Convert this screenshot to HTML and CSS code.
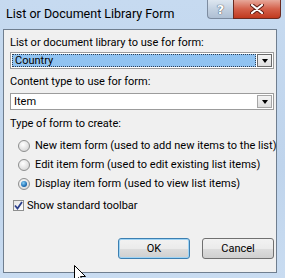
FILE: index.html
```html
<!DOCTYPE html>
<html lang="en">
<head>
    <meta charset="UTF-8">
    <title>List or Document Library Form</title>
    <link rel="stylesheet" href="styles.css">
</head>
<body>
    <div class="window">
        <div class="titlebar">
            <span class="title">List or Document Library Form</span>
            <div class="caption-buttons">
                <span class="btn-help">?</span>
                <span class="btn-close">
                    <svg width="14" height="10" viewBox="0 0 14 10">
                        <path d="M2 1 L12 9 M12 1 L2 9" stroke="#5a1a12" stroke-width="4" stroke-linecap="round"/>
                        <path d="M2 1 L12 9 M12 1 L2 9" stroke="#fff" stroke-width="2.2" stroke-linecap="round"/>
                    </svg>
                </span>
            </div>
        </div>
        <div class="client">
            <div class="field-label first">List or document library to use for form:</div>
            <div class="combo focused">
                <span class="combo-value">Country</span>
                <span class="combo-arrow"></span>
            </div>
            <div class="field-label">Content type to use for form:</div>
            <div class="combo second">
                <span class="combo-value">Item</span>
                <span class="combo-arrow"></span>
            </div>
            <div class="field-label group">Type of form to create:</div>
            <div class="options">
                <div class="option"><span class="radio"></span>New item form (used to add new items to the list)</div>
                <div class="option"><span class="radio"></span>Edit item form (used to edit existing list items)</div>
                <div class="option"><span class="radio checked"></span>Display item form (used to view list items)</div>
            </div>
            <div class="check-row">
                <span class="checkbox">
                    <svg width="9" height="9" viewBox="0 0 9 9">
                        <path d="M1 4.5 L3.5 7.5 L8 1" fill="none" stroke="#2b3f8c" stroke-width="1.8"/>
                    </svg>
                </span>
                Show standard toolbar
            </div>
            <div class="buttons">
                <button class="default">OK</button>
                <button>Cancel</button>
            </div>
        </div>
        <svg class="cursor" width="13" height="20" viewBox="0 0 13 20">
            <path d="M0.5 0.5 L0.5 16.5 L4.5 12.5 L7.5 18.5 L9.5 17.5 L6.5 11.5 L11.5 11.5 Z" fill="#fff" stroke="#000" stroke-width="1"/>
        </svg>
    </div>
</body>
</html>
```

FILE: styles.css
```css
body {
    margin: 0;
    font-family: Roboto, "Liberation Sans", sans-serif;
    font-size: 11px;
    color: #000;
}
.window {
    position: relative;
    width: 285px;
    height: 278px;
    box-sizing: border-box;
    padding: 0 8px 5px 3px;
    display: flex;
    flex-direction: column;
    overflow: hidden;
    background: linear-gradient(#c6daf0, #bfd4ec 60%, #c9dcf1);
}
.titlebar {
    height: 29px;
    display: flex;
    align-items: flex-start;
}
.title {
    flex: 1;
    padding: 6px 0 0 3px;
    font-size: 12.5px;
    line-height: 16px;
    white-space: nowrap;
}
.caption-buttons {
    display: flex;
    margin-right: -4px;
}
.btn-help,
.btn-close {
    height: 19px;
    box-sizing: border-box;
    display: flex;
    align-items: center;
    justify-content: center;
}
.btn-help {
    width: 26px;
    border: 1px solid #7d8ca0;
    border-top: none;
    border-right: none;
    border-radius: 0 0 0 4px;
    background: linear-gradient(#dde6f0, #c3d1e1 50%, #aebfd3);
    color: #fff;
    font-family: "DejaVu Sans", sans-serif;
    font-size: 13px;
    font-weight: bold;
    text-shadow: 0 0 1px #3c4a5c, 0 0 1px #3c4a5c;
}
.btn-close {
    width: 48px;
    border: 1px solid #6b2a20;
    border-top: none;
    border-radius: 0 0 4px 0;
    background: linear-gradient(#e7a89a, #d4604a 50%, #c0391f);
}
.client {
    flex: 1;
    background: #f0f0f0;
    border: 1px solid #6f7e8f;
    padding: 0 2px 0 6px;
}
.field-label {
    line-height: 16px;
    margin-top: 5px;
    white-space: nowrap;
}
.field-label.group {
    margin-top: 6px;
}
.combo {
    height: 17px;
    box-sizing: border-box;
    margin-top: 1px;
    border: 1px solid #9c9c9c;
    background: #fff;
    display: flex;
    padding: 1px;
}
.combo.second {
    margin-top: 3px;
}
.combo-value {
    flex: 1;
    line-height: 13px;
    padding-left: 2px;
    box-sizing: border-box;
}
.combo.focused .combo-value {
    background: #90c3f1;
    border: 1px dotted #2c3e54;
    line-height: 11px;
}
.combo-arrow {
    width: 15px;
    margin-left: 1px;
    box-sizing: border-box;
    border: 1px solid #a6a6a6;
    background: linear-gradient(#f4f4f4, #dedede);
    display: flex;
    align-items: center;
    justify-content: center;
}
.combo.focused .combo-arrow {
    border-color: #6b6b6b;
}
.combo-arrow::after {
    content: "";
    border-left: 3.5px solid transparent;
    border-right: 3.5px solid transparent;
    border-top: 4px solid #000;
    margin-top: 1px;
}
.options {
    margin-top: 4px;
    padding-left: 8px;
}
.option,
.check-row {
    height: 19px;
    display: flex;
    align-items: center;
    white-space: nowrap;
}
.radio {
    flex-shrink: 0;
    width: 12px;
    height: 12px;
    box-sizing: border-box;
    border: 1px solid #8e8f8f;
    border-radius: 50%;
    background: radial-gradient(circle at 40% 35%, #ffffff, #dcdcdc 70%, #c8c8c8);
    margin-right: 5px;
    display: flex;
    align-items: center;
    justify-content: center;
}
.radio.checked::after {
    content: "";
    width: 6px;
    height: 6px;
    border-radius: 50%;
    background: radial-gradient(circle at 40% 35%, #8ad2f7, #1f6fb5 60%, #0d4a8c);
}
.check-row {
    margin-top: 3px;
    padding-left: 3px;
}
.checkbox {
    flex-shrink: 0;
    width: 11px;
    height: 11px;
    box-sizing: border-box;
    border: 1px solid #8e8f8f;
    background: linear-gradient(135deg, #e4e4e4, #ffffff);
    margin-right: 3px;
    display: flex;
    align-items: center;
    justify-content: center;
}
.buttons {
    margin-top: 23px;
    display: flex;
    justify-content: flex-end;
    gap: 12px;
}
button {
    width: 72px;
    height: 21px;
    font-family: inherit;
    font-size: 11px;
    padding: 0;
    border: 1px solid #707070;
    border-radius: 3px;
    background: linear-gradient(#f2f2f2, #ebebeb 50%, #dddddd 51%, #cfcfcf);
    color: #000;
}
button.default {
    border-color: #3c7fb1;
    box-shadow: inset 0 0 0 1px #9fd4f5;
}
.cursor {
    position: absolute;
    left: 74px;
    top: 265px;
}
```
